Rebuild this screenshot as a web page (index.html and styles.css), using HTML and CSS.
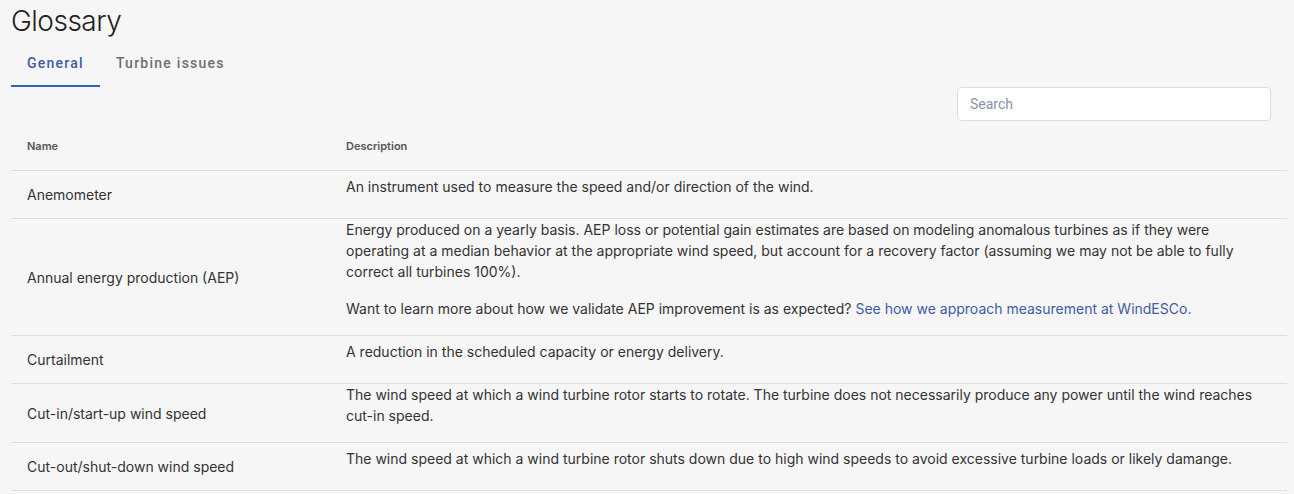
FILE: index.html
```html
<!DOCTYPE html>
<html>
<head>
  <meta charset="UTF-8">
  <title>Glossary</title>
  <link rel="stylesheet" href="styles.css">
</head>
<body>
  <div class="page">
    <h1 class="title">Glossary</h1>

    <div class="tabs">
      <div class="tab active">General</div>
      <div class="tab">Turbine issues</div>
    </div>

    <div class="toolbar">
      <input type="text" class="search" placeholder="Search">
    </div>

    <table class="glossary">
      <thead>
        <tr>
          <th class="col-name">Name</th>
          <th>Description</th>
        </tr>
      </thead>
      <tbody>
        <tr>
          <td>Anemometer</td>
          <td><p>An instrument used to measure the speed and/or direction of the wind.</p></td>
        </tr>
        <tr>
          <td>Annual energy production (AEP)</td>
          <td>
            <p>Energy produced on a yearly basis. AEP loss or potential gain estimates are based on modeling anomalous turbines as if they were operating at a median behavior at the appropriate wind speed, but account for a recovery factor (assuming we may not be able to fully correct all turbines 100%).</p>
            <p>Want to learn more about how we validate AEP improvement is as expected? <a href="#">See how we approach measurement at WindESCo.</a></p>
          </td>
        </tr>
        <tr>
          <td>Curtailment</td>
          <td><p>A reduction in the scheduled capacity or energy delivery.</p></td>
        </tr>
        <tr>
          <td>Cut-in/start-up wind speed</td>
          <td><p>The wind speed at which a wind turbine rotor starts to rotate. The turbine does not necessarily produce any power until the wind reaches cut-in speed.</p></td>
        </tr>
        <tr>
          <td>Cut-out/shut-down wind speed</td>
          <td><p>The wind speed at which a wind turbine rotor shuts down due to high wind speeds to avoid excessive turbine loads or likely damange.</p></td>
        </tr>
      </tbody>
    </table>
  </div>
</body>
</html>
```

FILE: styles.css
```css
body {
  margin: 0;
  background: #f6f6f6;
  font-family: "Inter", "Liberation Sans", sans-serif;
  color: #333;
}

.page {
  padding: 0 7px 0 11px;
}

.title {
  margin: 0;
  padding-top: 4px;
  height: 35px;
  font-size: 28px;
  font-weight: 300;
  color: #222;
  letter-spacing: -0.5px;
}

.tabs {
  display: flex;
}

.tab {
  padding: 0 16px;
  height: 46px;
  line-height: 48px;
  font-family: "Roboto", sans-serif;
  font-size: 14px;
  font-weight: 500;
  letter-spacing: 1.25px;
  color: #6f6f6f;
  border-bottom: 2px solid transparent;
}

.tab.active {
  color: #3d5ba9;
  border-bottom-color: #3461b5;
}

.toolbar {
  display: flex;
  justify-content: flex-end;
  padding-right: 16px;
}

.search {
  width: 314px;
  height: 34px;
  box-sizing: border-box;
  border: 1px solid #dcdcdc;
  border-radius: 4px;
  background: #fff;
  padding: 0 12px;
  font-family: "Roboto", sans-serif;
  font-size: 14px;
  outline: none;
}

.search::placeholder {
  color: #8a93a3;
}

.glossary {
  width: 100%;
  border-collapse: collapse;
}

.glossary th {
  height: 49px;
  padding: 0 16px;
  text-align: left;
  font-size: 11px;
  font-weight: 600;
  color: #555;
  border-bottom: 1px solid #dddddd;
}

.glossary .col-name {
  width: 287px;
}

.glossary td {
  height: 47px;
  padding: 0 16px;
  font-size: 14px;
  line-height: 21px;
  vertical-align: middle;
  border-bottom: 1px solid #dddddd;
}

.glossary p {
  margin: 0 0 16px;
}

.glossary a {
  color: #3f5aa6;
  text-decoration: none;
}
```
